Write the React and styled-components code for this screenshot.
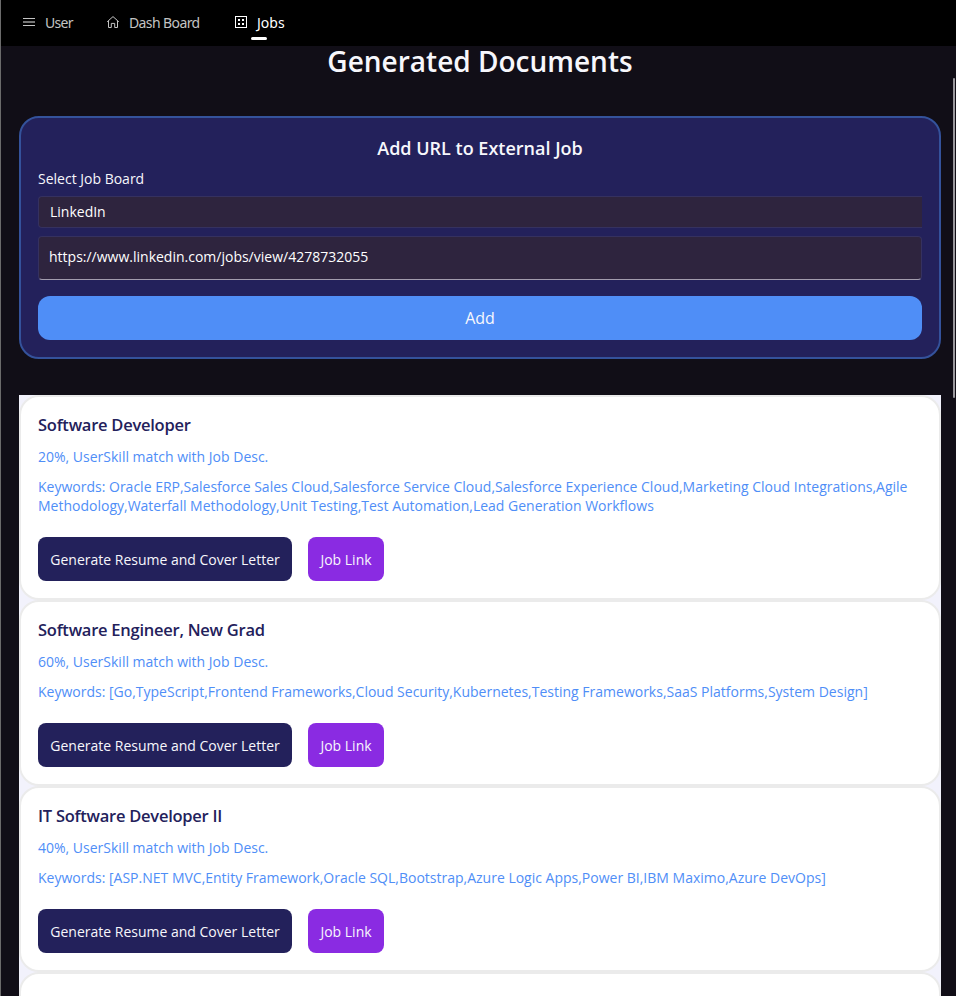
import React from "react";
import styled, { createGlobalStyle } from "styled-components";

const GlobalStyle = createGlobalStyle`
  * { box-sizing: border-box; }
  body { margin: 0; background: #110e17; font-family: "Open Sans", "Noto Sans", sans-serif; }
  button, input, select { font-family: inherit; }
`;

const Window = styled.div`
  position: relative;
  height: 996px;
  overflow: hidden;
  display: flex;
  flex-direction: column;
  background: #110e17;
  border-left: 1px solid #6b6b6b;
`;

const NavBar = styled.nav`
  flex: none;
  height: 46px;
  display: flex;
  background: #000;
  padding-left: 20px;
`;

const NavItem = styled.a`
  position: relative;
  display: flex;
  align-items: center;
  gap: 8px;
  width: ${(p) => p.$width}px;
  color: ${(p) => (p.$active ? "#fff" : "#c4c4c4")};
  font: 14px/20px "Noto Sans", sans-serif;
  letter-spacing: ${(p) => p.$spacing || 0}px;
  white-space: nowrap;
  svg { flex: none; display: block; margin-top: -2px; }
`;

const ActiveMark = styled.span`
  position: absolute;
  left: 18px;
  top: 37px;
  width: 16px;
  height: 3px;
  border-radius: 1.5px;
  background: #fff;
`;

const Page = styled.main`
  flex: 1;
  min-height: 0;
  overflow: hidden;
  padding: 0 15px 0 18px;
`;

const PageTitle = styled.h1`
  margin: 0;
  height: 70px;
  text-align: center;
  color: #f7f7fc;
  font-size: 28px;
  font-weight: 600;
  line-height: 30px;
`;

const UrlPanel = styled.section`
  height: 243px;
  border: 2px solid #34529b;
  border-radius: 20px;
  background: #23215b;
  padding: 18px 17px 0;
  display: flex;
  flex-direction: column;
`;

const PanelTitle = styled.h2`
  margin: 0 0 9px;
  text-align: center;
  color: #f7f7fc;
  font-size: 18px;
  font-weight: 600;
  line-height: 24px;
`;

const FieldLabel = styled.label`
  color: #f7f7fc;
  font-size: 14px;
  line-height: 19px;
  margin-bottom: 8px;
`;

const BoardPicker = styled.div`
  height: 32px;
  border: 1px solid #35315f;
  border-right: 0;
  border-radius: 4px 0 0 4px;
  background: #2e243e;
  color: #fff;
  padding-left: 11px;
  font-size: 14px;
  line-height: 30px;
`;

const UrlInput = styled.input`
  height: 44px;
  margin: 8px 0 16px;
  border: 1px solid #35315f;
  border-bottom-color: #a29cad;
  border-radius: 4px;
  background: #2e243e;
  color: #fff;
  padding: 0 10px 3px;
  font-size: 14px;
  outline: none;
`;

const AddButton = styled.button`
  height: 44px;
  border: 0;
  border-radius: 12px;
  background: #4f8ef7;
  color: #f7f7fc;
  font-size: 16px;
`;

const JobList = styled.section`
  margin-top: 36px;
  background: #f2f2fc;
`;

const JobCard = styled.article`
  border: 2px solid #ebebeb;
  border-radius: 20px;
  background: #fff;
  padding: 17px;
`;

const JobTitle = styled.h3`
  margin: 0 0 11px;
  color: #23215b;
  font-size: 16.5px;
  font-weight: 600;
  letter-spacing: -0.25px;
  line-height: 22px;
`;

const JobText = styled.p`
  margin: 0 0 11px;
  color: #4f8ef7;
  font-size: 14px;
  line-height: 19px;
`;

const Actions = styled.div`
  display: flex;
  gap: 16px;
  margin-top: 22px;
`;

const ActionButton = styled.button`
  height: 44px;
  width: ${(p) => p.$width}px;
  border: 0;
  border-radius: 8px;
  padding: 0;
  background: ${(p) => p.$color};
  color: #f7f7fc;
  font-size: 14px;
  white-space: nowrap;
`;

const ScrollThumb = styled.div`
  position: absolute;
  right: 1px;
  top: 78px;
  width: 2px;
  height: 320px;
  border-radius: 1px;
  background: #9a989d;
`;

const MenuIcon = () => (
  <svg width="16" height="16" viewBox="0 0 16 16" stroke="currentColor" fill="none">
    <path d="M2 4.5h12M2 11.5h12" />
    <path d="M2 8h12" strokeWidth="2" opacity=".6" />
  </svg>
);

const HomeIcon = () => (
  <svg width="16" height="16" viewBox="0 0 16 16" stroke="currentColor" fill="none" strokeLinejoin="round">
    <path d="M3.5 6.6 8 2.6l4.5 4v6.9H9.7V9.4H6.3v4.1H3.5z" />
    <path d="M2.5 7.6 3.5 6.6M13.5 7.6 12.5 6.6" strokeLinecap="round" />
  </svg>
);

const JobsIcon = () => (
  <svg width="16" height="16" viewBox="0 0 16 16" fill="none">
    <rect x="2.5" y="2.5" width="11" height="11" stroke="currentColor" />
    <path fill="currentColor" d="M5 5h2v2H5zM9 5h2v2H9zM5 9h2v2H5zM9 9h2v2H9z" />
  </svg>
);

const jobs = [
  {
    title: "Software Developer",
    match: 20,
    keywords:
      "Oracle ERP,Salesforce Sales Cloud,Salesforce Service Cloud,Salesforce Experience Cloud,Marketing Cloud Integrations,Agile Methodology,Waterfall Methodology,Unit Testing,Test Automation,Lead Generation Workflows",
  },
  {
    title: "Software Engineer, New Grad",
    match: 60,
    keywords:
      "[Go,TypeScript,Frontend Frameworks,Cloud Security,Kubernetes,Testing Frameworks,SaaS Platforms,System Design]",
  },
  {
    title: "IT Software Developer II",
    match: 40,
    keywords:
      "[ASP.NET MVC,Entity Framework,Oracle SQL,Bootstrap,Azure Logic Apps,Power BI,IBM Maximo,Azure DevOps]",
  },
  { title: "Software" },
];

export default function App() {
  return (
    <>
      <GlobalStyle />
      <Window>
        <NavBar>
          <NavItem $width={84} $spacing={-0.7}><MenuIcon />User</NavItem>
          <NavItem $width={128} $spacing={-0.6}><HomeIcon />Dash Board</NavItem>
          <NavItem $width={60} $active><JobsIcon />Jobs<ActiveMark /></NavItem>
        </NavBar>
        <Page>
          <PageTitle>Generated Documents</PageTitle>
          <UrlPanel>
            <PanelTitle>Add URL to External Job</PanelTitle>
            <FieldLabel>Select Job Board</FieldLabel>
            <BoardPicker>LinkedIn</BoardPicker>
            <UrlInput defaultValue="https://www.linkedin.com/jobs/view/4278732055" />
            <AddButton>Add</AddButton>
          </UrlPanel>
          <JobList>
            {jobs.map((job, i) => (
              <JobCard key={i}>
                <JobTitle>{job.title}</JobTitle>
                {job.keywords && (
                  <>
                    <JobText>{job.match}%, UserSkill match with Job Desc.</JobText>
                    <JobText>Keywords: {job.keywords}</JobText>
                    <Actions>
                      <ActionButton $width={254} $color="#23215b">Generate Resume and Cover Letter</ActionButton>
                      <ActionButton $width={76} $color="#8a2be2">Job Link</ActionButton>
                    </Actions>
                  </>
                )}
              </JobCard>
            ))}
          </JobList>
        </Page>
        <ScrollThumb />
      </Window>
    </>
  );
}
